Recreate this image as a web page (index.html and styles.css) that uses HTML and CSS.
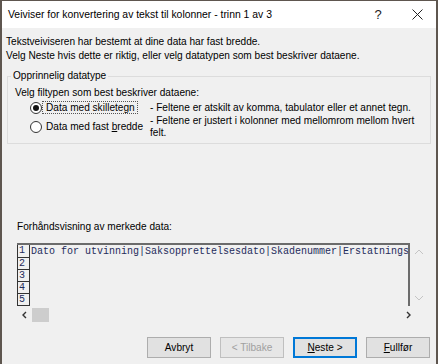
FILE: index.html
```html
<!DOCTYPE html>
<html lang="no">
<head>
    <meta charset="UTF-8">
    <title>Veiviser for konvertering av tekst til kolonner</title>
    <link rel="stylesheet" href="styles.css">
</head>
<body>
    <div class="window">
        <div class="titlebar">
            <span class="title">Veiviser for konvertering av tekst til kolonner - trinn 1 av 3</span>
            <span class="help">?</span>
            <span class="close">
                <svg width="11" height="11" viewBox="0 0 11 11"><path d="M0.5 0.5L10.5 10.5M10.5 0.5L0.5 10.5" stroke="#222" stroke-width="1" fill="none"/></svg>
            </span>
        </div>
        <div class="body">
            <p class="intro">Tekstveiviseren har bestemt at dine data har fast bredde.</p>
            <p class="intro">Velg Neste hvis dette er riktig, eller velg datatypen som best beskriver dataene.</p>

            <fieldset class="group">
                <legend>Opprinnelig datatype</legend>
                <div class="hint">Velg filtypen som best beskriver dataene:</div>
                <div class="option">
                    <span class="radio checked"></span>
                    <span class="label"><span class="focus">Data med skillete<u>g</u>n</span></span>
                    <span class="desc">- Feltene er atskilt av komma, tabulator eller et annet tegn.</span>
                </div>
                <div class="option two">
                    <span class="radio"></span>
                    <span class="label"><span class="plain">Data med fast <u>b</u>redde</span></span>
                    <span class="desc">- Feltene er justert i kolonner med mellomrom mellom hvert<br>felt.</span>
                </div>
            </fieldset>

            <div class="preview-label">Forhåndsvisning av merkede data:</div>
            <div class="preview-wrap">
                <div class="preview">
                    <div class="nums">
                        <div>1</div>
                        <div>2</div>
                        <div>3</div>
                        <div>4</div>
                        <div>5</div>
                    </div>
                    <div class="lines">
                        <div>Dato for utvinning|Saksopprettelsesdato|Skadenummer|Erstatningsbeløp</div>
                    </div>
                </div>
                <div class="vscroll">
                    <svg width="10" height="6" viewBox="0 0 10 6"><path d="M1 5L5 1L9 5" stroke="#c4c4c4" fill="none"/></svg>
                    <svg width="10" height="6" viewBox="0 0 10 6"><path d="M1 1L5 5L9 1" stroke="#c4c4c4" fill="none"/></svg>
                </div>
            </div>
            <div class="hscroll">
                <svg width="6" height="8" viewBox="0 0 6 8"><path d="M5 1L2 4L5 7" stroke="#333" stroke-width="1.4" fill="none"/></svg>
                <span class="thumb"></span>
                <svg class="right" width="6" height="8" viewBox="0 0 6 8"><path d="M1 1L4 4L1 7" stroke="#333" stroke-width="1.4" fill="none"/></svg>
            </div>

            <div class="buttons">
                <button>Avbryt</button>
                <button disabled>&lt; Tilbake</button>
                <button class="default"><u>N</u>este &gt;</button>
                <button><u>F</u>ullfør</button>
            </div>
        </div>
    </div>
</body>
</html>
```

FILE: styles.css
```css
html, body {
    margin: 0;
    height: 100%;
    overflow: hidden;
}
body {
    background: #5e564f;
    font-family: "Liberation Sans", Arial, sans-serif;
    font-size: 10.1px;
    color: #000;
}
.window {
    margin: 1px 2px 0 2px;
    height: 363px;
    background: #f0f0f0;
    display: flex;
    flex-direction: column;
}
.titlebar {
    height: 27px;
    flex: none;
    background: #fff;
    display: flex;
    align-items: center;
    padding-left: 6px;
    font-size: 10.4px;
}
.title {
    flex: 1;
}
.help {
    width: 40px;
    text-align: center;
    font-size: 13px;
    color: #222;
}
.close {
    width: 38px;
    display: flex;
    justify-content: center;
}
.body {
    flex: 1;
    padding: 0 5px 6px 4px;
    display: flex;
    flex-direction: column;
}
.intro {
    margin: 0;
    line-height: 14px;
}
.intro:first-child {
    margin-top: 7px;
}
.group {
    margin: 6px 0 0 1px;
    border: 1px solid #dcdcdc;
    padding: 0 8px 4px 7px;
}
.group legend {
    padding: 0 2px;
    margin-left: -4px;
    line-height: 14px;
}
.hint {
    margin-top: 3px;
    line-height: 14px;
}
.option {
    display: flex;
    align-items: center;
    margin-top: 1px;
    line-height: 14px;
}
.option.two {
    margin-top: 0;
    line-height: 12px;
}
.radio {
    width: 12px;
    height: 12px;
    border: 1px solid #333;
    border-radius: 50%;
    background: #fff;
    margin: 0 1px 0 15px;
    box-sizing: border-box;
    position: relative;
    flex: none;
}
.radio.checked::after {
    content: "";
    position: absolute;
    left: 2px;
    top: 2px;
    width: 6px;
    height: 6px;
    border-radius: 50%;
    background: #111;
}
.label {
    width: 107px;
    flex: none;
    white-space: nowrap;
}
.focus {
    outline: 1px dotted #555;
    padding: 0 2px 0 3px;
}
.plain {
    padding-left: 3px;
}
.desc {
    flex: 1;
    white-space: nowrap;
}
.preview-label {
    margin: 76px 0 0 11px;
    line-height: 14px;
}
.preview-wrap {
    display: flex;
    margin: 9px 0 0 11px;
}
.preview {
    width: 393px;
    height: 63px;
    border-top: 2px solid #6b6b6b;
    border-right: 2px solid #6b6b6b;
    display: flex;
    overflow: hidden;
    box-sizing: border-box;
}
.nums {
    width: 11px;
    border-left: 1px solid #333;
    border-right: 1px solid #333;
    font-family: "Liberation Mono", monospace;
    font-size: 10px;
    color: #1f2c5c;
    flex: none;
}
.nums div {
    height: 11px;
    line-height: 12px;
    border-bottom: 1px solid #333;
    padding-left: 1px;
}
.nums div:first-child {
    height: 12px;
}
.lines {
    font-family: "Liberation Mono", monospace;
    font-size: 10px;
    color: #1f2c5c;
    white-space: nowrap;
    line-height: 14px;
    padding-left: 1px;
}
.vscroll {
    width: 17px;
    display: flex;
    flex-direction: column;
    justify-content: space-between;
    align-items: center;
    padding: 6px 0 5px 0;
}
.hscroll {
    display: flex;
    align-items: center;
    margin: 2px 0 0 15px;
    height: 14px;
    width: 391px;
}
.thumb {
    width: 17px;
    height: 14px;
    background: #cdcdcd;
    margin-left: 5px;
}
.hscroll .right {
    margin-left: auto;
}
.buttons {
    display: flex;
    justify-content: flex-end;
    gap: 9px;
    margin-top: auto;
    padding-right: 1px;
}
.buttons button {
    width: 64px;
    height: 21px;
    background: #e1e1e1;
    border: 1px solid #adadad;
    font-family: inherit;
    font-size: 10.1px;
    color: #000;
    padding: 0;
}
.buttons button:disabled {
    color: #a0a0a0;
    border-color: #bfbfbf;
    background: #e6e6e6;
}
.buttons button.default {
    border: 1px solid #0078d7;
    box-shadow: inset 0 0 0 1px #0078d7;
}
```
